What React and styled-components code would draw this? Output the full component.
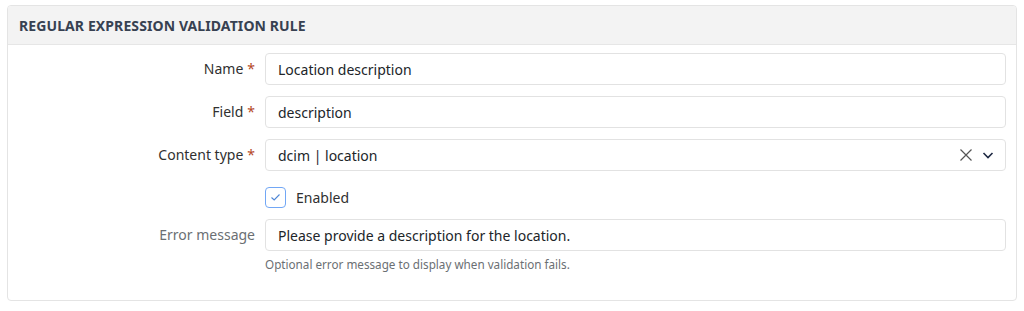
import React from "react";
import styled, { createGlobalStyle } from "styled-components";

const Global = createGlobalStyle`
  html, body { margin: 0; padding: 0; background: #fff; }
  body { font-family: "Noto Sans", "Open Sans", sans-serif; color: #212529; }
  * { box-sizing: border-box; }
`;

const Page = styled.div`
  padding: 5px 7px 10px 7px;
`;

const Card = styled.section`
  border: 1px solid #e4e4e4;
  border-radius: 4px;
  background: #fff;
  overflow: hidden;
`;

const Header = styled.header`
  background: #f3f3f3;
  border-bottom: 1px solid #e6e6e6;
  height: 39px;
  display: flex;
  align-items: center;
  padding: 0 11px;
`;

const Title = styled.h2`
  margin: 0;
  font-size: 14px;
  font-weight: 700;
  color: #374151;
  letter-spacing: 0.1px;
  text-transform: uppercase;
`;

const Body = styled.div`
  padding: 8px 10px 28px 0;
  display: flex;
  flex-direction: column;
  gap: 11px;
`;

const Row = styled.div`
  display: grid;
  grid-template-columns: 257px 1fr;
  align-items: ${(p) => (p.$top ? "start" : "center")};
`;

const Label = styled.label`
  text-align: right;
  padding-right: 10px;
  font-size: 14px;
  line-height: 32px;
  color: ${(p) => (p.$required ? "#303030" : "#6b6f73")};
`;

const Star = styled.span`
  color: #b4471f;
  margin-left: 4px;
`;

const Control = styled.div`
  display: flex;
  flex-direction: column;
`;

const Input = styled.div`
  height: 32px;
  border: 1px solid #e2e2e2;
  border-radius: 4px;
  display: flex;
  align-items: center;
  padding: 0 12px;
  font-size: 14px;
  color: #212529;
  background: #fff;
`;

const Value = styled.span`
  flex: 1;
`;

const Icons = styled.span`
  display: flex;
  align-items: center;
  gap: 8px;
  margin-right: -2px;
`;

const CheckRow = styled.div`
  display: flex;
  align-items: center;
  gap: 10px;
  height: 21px;
  margin: 5px 0 0;
  font-size: 14px;
  color: #303030;
`;

const Box = styled.span`
  width: 21px;
  height: 21px;
  border: 1.5px solid #72a7f5;
  border-radius: 4px;
  display: flex;
  align-items: center;
  justify-content: center;
  background: #fff;
`;

const Help = styled.div`
  font-size: 11.7px;
  color: #6b6f73;
  margin-top: 5px;
`;

const fields = [
  { label: "Name", required: true, value: "Location description" },
  { label: "Field", required: true, value: "description" },
  { label: "Content type", required: true, value: "dcim | location", select: true },
];

export default function App() {
  return (
    <>
      <Global />
      <Page>
        <Card>
          <Header>
            <Title>Regular Expression Validation Rule</Title>
          </Header>
          <Body>
            {fields.map((f) => (
              <Row key={f.label}>
                <Label $required={f.required}>
                  {f.label}
                  {f.required && <Star>*</Star>}
                </Label>
                <Input>
                  <Value>{f.value}</Value>
                  {f.select && (
                    <Icons>
                      <svg width="14" height="14" viewBox="0 0 14 14">
                        <path d="M1.5 1.5 L12.5 12.5 M12.5 1.5 L1.5 12.5" stroke="#555" strokeWidth="1.2" fill="none" />
                      </svg>
                      <svg width="14" height="14" viewBox="0 0 14 14">
                        <path d="M2.5 5 L7 9.5 L11.5 5" stroke="#1f2a44" strokeWidth="1.6" fill="none" />
                      </svg>
                    </Icons>
                  )}
                </Input>
              </Row>
            ))}
            <Row>
              <span />
              <CheckRow>
                <Box>
                  <svg width="11" height="9" viewBox="0 0 11 9">
                    <path d="M1.5 4.5 L4.2 7 L9.5 1.5" stroke="#4f87d6" strokeWidth="1.1" fill="none" />
                  </svg>
                </Box>
                Enabled
              </CheckRow>
            </Row>
            <Row $top>
              <Label>Error message</Label>
              <Control>
                <Input>
                  <Value>Please provide a description for the location.</Value>
                </Input>
                <Help>Optional error message to display when validation fails.</Help>
              </Control>
            </Row>
          </Body>
        </Card>
      </Page>
    </>
  );
}
